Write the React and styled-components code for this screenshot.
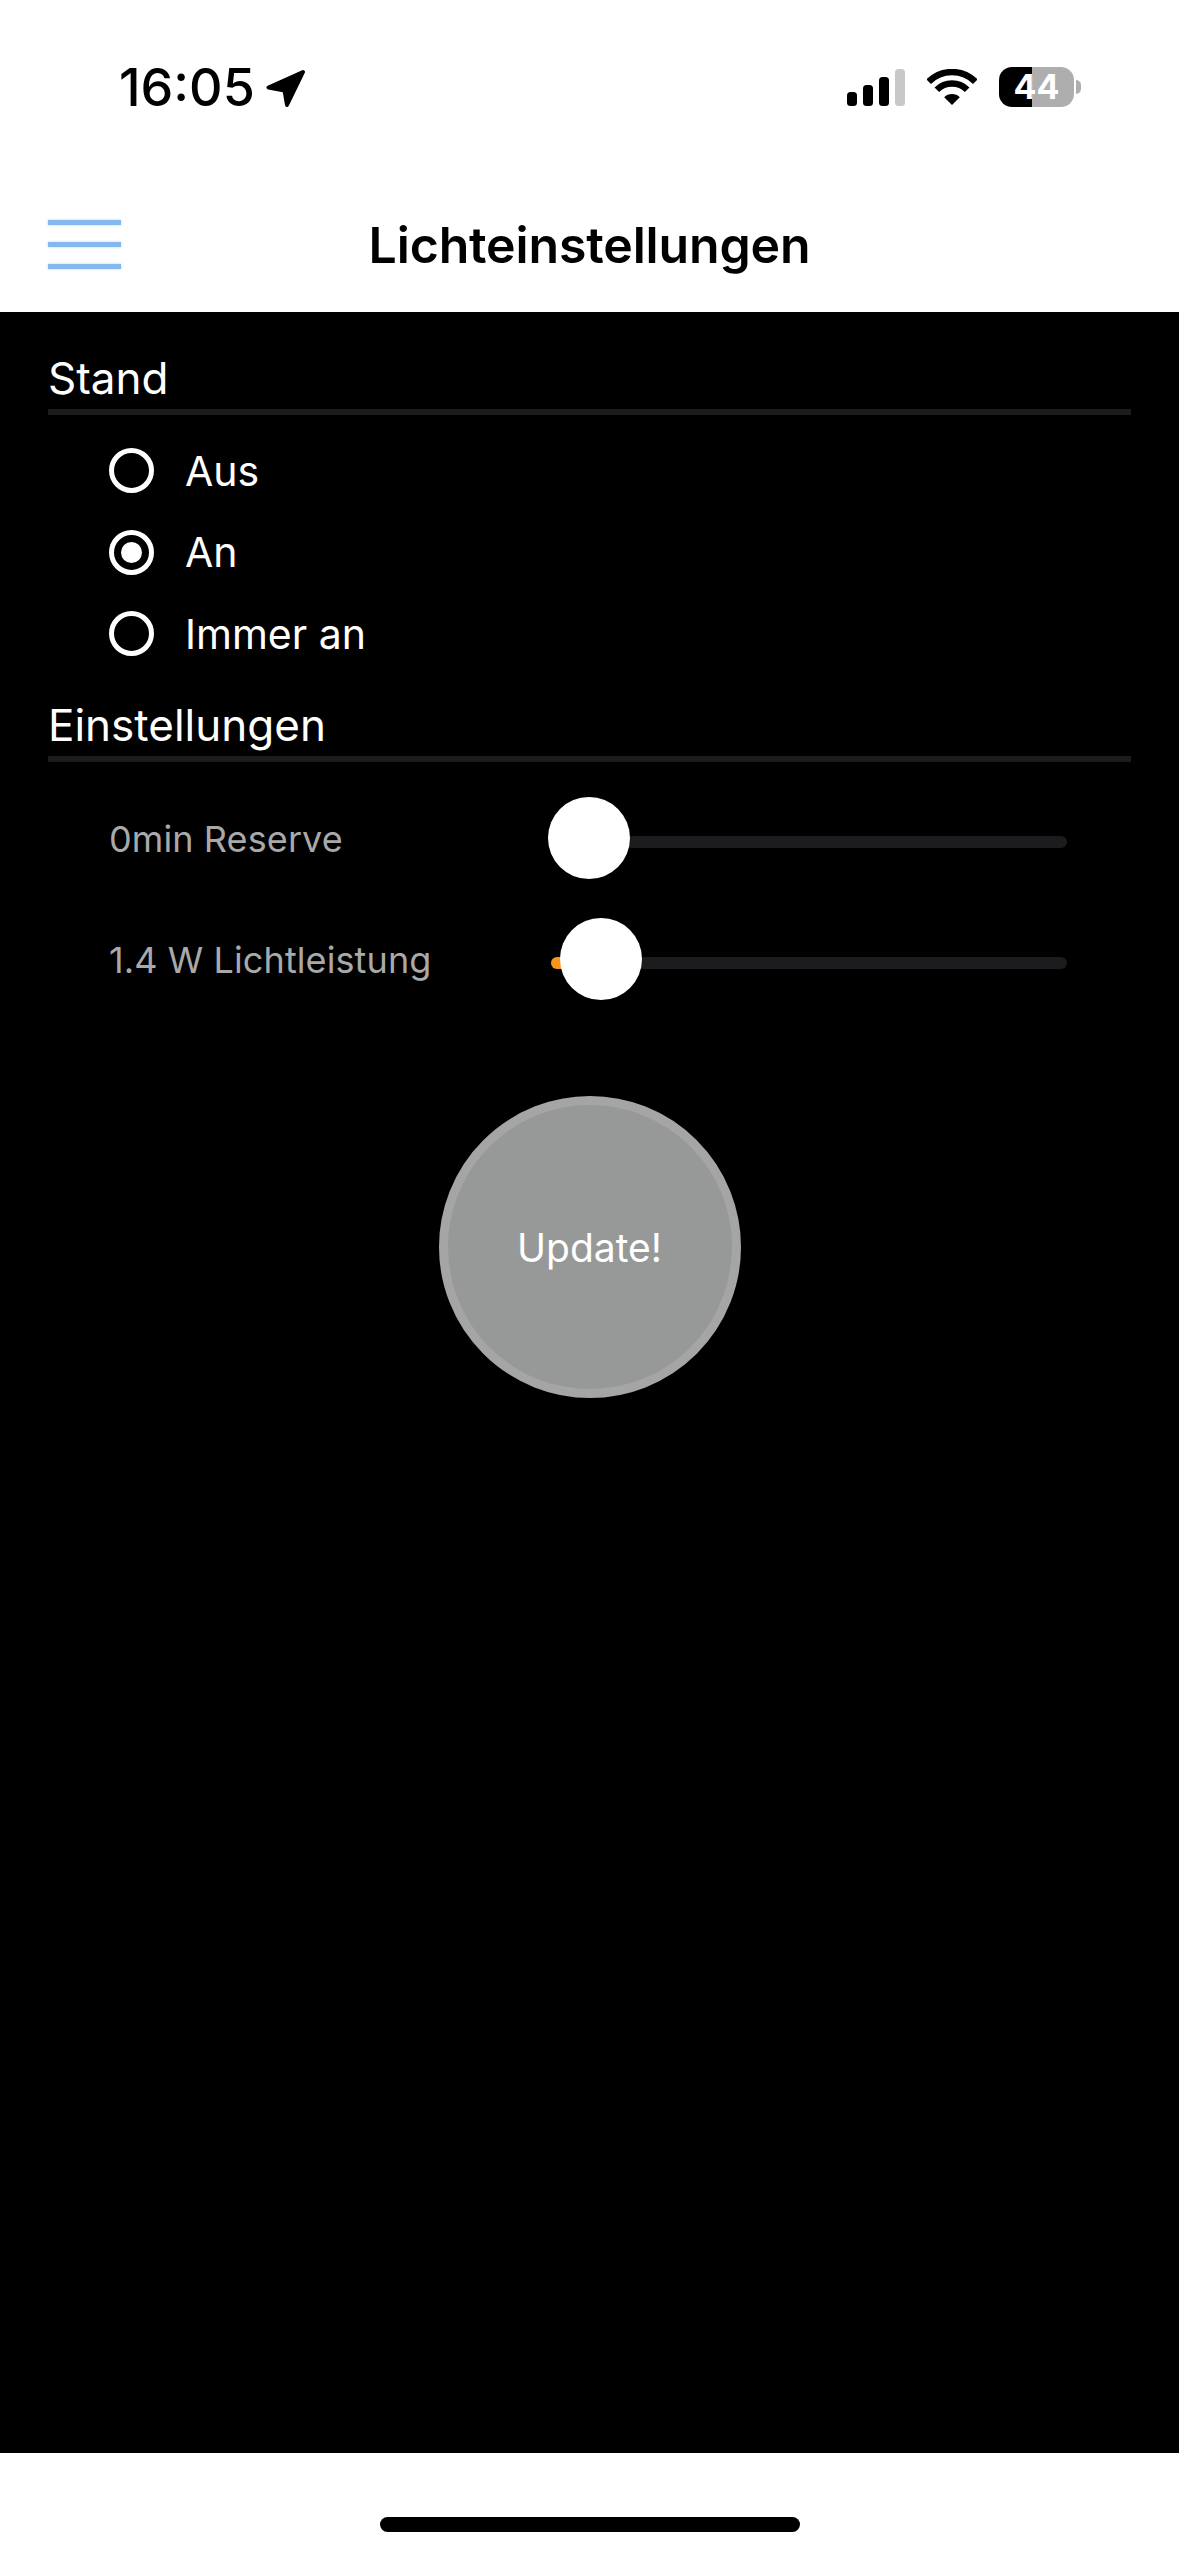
import { createGlobalStyle } from 'styled-components';
import styled from 'styled-components';

const GlobalStyle = createGlobalStyle`
  html, body {
    margin: 0;
    padding: 0;
    background: #fff;
  }
  * {
    box-sizing: border-box;
  }
`;

const Page = styled.div`
  width: 1179px;
  height: 2556px;
  display: flex;
  flex-direction: column;
  font-family: Inter, "Noto Sans", sans-serif;
  background: #fff;
`;

const StatusBar = styled.div`
  height: 197px;
  padding: 67px 105px 0 119px;
  display: flex;
  justify-content: space-between;
  align-items: flex-start;
  flex: none;
`;

const TimeGroup = styled.div`
  display: flex;
  align-items: flex-start;
  gap: 11px;
`;

const Time = styled.span`
  font-size: 52px;
  line-height: 42px;
  font-weight: 500;
  color: #000;
`;

const StatusIcons = styled.div`
  display: flex;
  align-items: center;
  height: 40px;
  gap: 22px;
`;

const Battery = styled.div`
  position: relative;
  width: 75px;
  height: 40px;
  border-radius: 13px;
  background: linear-gradient(90deg, #000 0 44%, #aeaeae 44% 100%);
  color: #fff;
  font-size: 34px;
  font-weight: 700;
  line-height: 40px;
  text-align: center;

  &::after {
    content: '';
    position: absolute;
    right: -7px;
    top: 13px;
    width: 5px;
    height: 14px;
    border-radius: 0 7px 7px 0;
    background: #aeaeae;
  }
`;

const NavBar = styled.div`
  height: 115px;
  flex: none;
  padding: 0 48px;
  display: grid;
  grid-template-columns: 1fr auto 1fr;
  align-items: flex-start;
`;

const Burger = styled.div`
  width: 73px;
  display: flex;
  flex-direction: column;
  gap: 17px;
  padding-top: 23px;
`;

const BurgerLine = styled.span`
  display: block;
  height: 5px;
  background: #84b8ee;
  box-shadow: 0 0 3px rgba(132, 184, 238, 0.6);
`;

const Title = styled.h1`
  margin: 0;
  padding-top: 12px;
  font-size: 50px;
  line-height: 72px;
  font-weight: 600;
  letter-spacing: -0.15px;
  color: #000;
`;

const Main = styled.main`
  flex: 1;
  background: #000;
  padding: 16px 48px 0;
  display: flex;
  flex-direction: column;
`;

const SectionHead = styled.h2`
  margin: 0;
  height: 87px;
  padding-top: 20px;
  font-size: 44px;
  line-height: 60px;
  font-weight: 400;
  color: #fff;
  border-bottom: 6px solid #1c1c1e;
`;

const RadioList = styled.div`
  margin-top: 15px;
  padding-left: 61px;
`;

const RadioRow = styled.div`
  height: 81.5px;
  display: flex;
  align-items: center;
  gap: 31px;
  color: #fff;
  font-size: 41px;
`;

const RadioMark = styled.span`
  width: 45px;
  height: 45px;
  border-radius: 50%;
  border: 5px solid #fff;
  display: flex;
  align-items: center;
  justify-content: center;

  &::after {
    content: '';
    width: 21px;
    height: 21px;
    border-radius: 50%;
    background: ${(p) => (p.$checked ? '#fff' : 'transparent')};
  }
`;

const SliderList = styled.div`
  margin-top: 16px;
  padding-left: 61px;
`;

const SliderRow = styled.div`
  height: 121px;
  display: grid;
  grid-template-columns: 442px 516px;
  align-items: center;
`;

const SliderLabel = styled.span`
  padding-top: 2px;
  color: #a9a9a9;
  font-size: 36px;
  letter-spacing: 0.1px;
`;

const Track = styled.div`
  position: relative;
  height: 12px;
  margin-top: 8px;
  border-radius: 6px;
  background: #1c1c1e;
`;

const TrackFill = styled.div`
  height: 100%;
  border-radius: 6px;
  background: #f7931a;
`;

const Thumb = styled.div`
  position: absolute;
  top: -39px;
  left: ${(p) => p.$left}px;
  width: 82px;
  height: 82px;
  border-radius: 50%;
  background: #fff;
`;

const ButtonWrap = styled.div`
  margin-top: 76px;
  display: flex;
  justify-content: center;
`;

const UpdateButton = styled.button`
  width: 302px;
  height: 302px;
  border-radius: 50%;
  border: 9px solid #a4a5a4;
  background: #979998;
  color: #fff;
  font-family: inherit;
  font-size: 39px;
  padding: 2px 0 0;
`;

const Footer = styled.footer`
  height: 103px;
  flex: none;
  padding-top: 64px;
  display: flex;
  justify-content: center;
  align-items: flex-start;
`;

const HomeBar = styled.div`
  width: 420px;
  height: 15px;
  border-radius: 8px;
  background: #000;
`;

const LocationSvg = styled.svg`
  margin-top: 2px;
`;

const LocationIcon = () => (
  <LocationSvg width="40" height="39" viewBox="0 0 40 39">
    <path
      d="M37 3 L2.5 18.5 L18.5 21.5 L21 36 Z"
      fill="#000"
      stroke="#000"
      strokeWidth="4"
      strokeLinejoin="round"
    />
  </LocationSvg>
);

const SignalIcon = () => (
  <svg width="58" height="37" viewBox="0 0 58 37">
    <rect x="0" y="23" width="10" height="14" rx="3.5" fill="#000" />
    <rect x="16" y="16" width="10" height="21" rx="3.5" fill="#000" />
    <rect x="32" y="8" width="10" height="29" rx="3.5" fill="#000" />
    <rect x="48" y="0" width="10" height="37" rx="3.5" fill="#c8c8c8" />
  </svg>
);

const WifiIcon = () => (
  <svg width="50" height="37" viewBox="0 0 50 37">
    <path d="M1.7 12.7 A33 33 0 0 1 48.3 12.7" fill="none" stroke="#000" strokeWidth="6.5" />
    <path d="M9.8 20.8 A21.5 21.5 0 0 1 40.2 20.8" fill="none" stroke="#000" strokeWidth="6.5" />
    <path d="M25 36 L17.2 28.2 A11 11 0 0 1 32.8 28.2 Z" fill="#000" />
  </svg>
);

const radios = [
  { label: 'Aus', checked: false },
  { label: 'An', checked: true },
  { label: 'Immer an', checked: false },
];

const sliders = [
  { label: '0min Reserve', left: -3, fill: 0 },
  { label: '1.4 W Lichtleistung', left: 9, fill: 30 },
];

export default function App() {
  return (
    <Page>
      <GlobalStyle />
      <StatusBar>
        <TimeGroup>
          <Time>16:05</Time>
          <LocationIcon />
        </TimeGroup>
        <StatusIcons>
          <SignalIcon />
          <WifiIcon />
          <Battery>44</Battery>
        </StatusIcons>
      </StatusBar>
      <NavBar>
        <Burger>
          <BurgerLine />
          <BurgerLine />
          <BurgerLine />
        </Burger>
        <Title>Lichteinstellungen</Title>
      </NavBar>
      <Main>
        <SectionHead>Stand</SectionHead>
        <RadioList>
          {radios.map((r) => (
            <RadioRow key={r.label}>
              <RadioMark $checked={r.checked} />
              {r.label}
            </RadioRow>
          ))}
        </RadioList>
        <SectionHead>Einstellungen</SectionHead>
        <SliderList>
          {sliders.map((s) => (
            <SliderRow key={s.label}>
              <SliderLabel>{s.label}</SliderLabel>
              <Track>
                <TrackFill style={{ width: s.fill }} />
                <Thumb $left={s.left} />
              </Track>
            </SliderRow>
          ))}
        </SliderList>
        <ButtonWrap>
          <UpdateButton>Update!</UpdateButton>
        </ButtonWrap>
      </Main>
      <Footer>
        <HomeBar />
      </Footer>
    </Page>
  );
}
